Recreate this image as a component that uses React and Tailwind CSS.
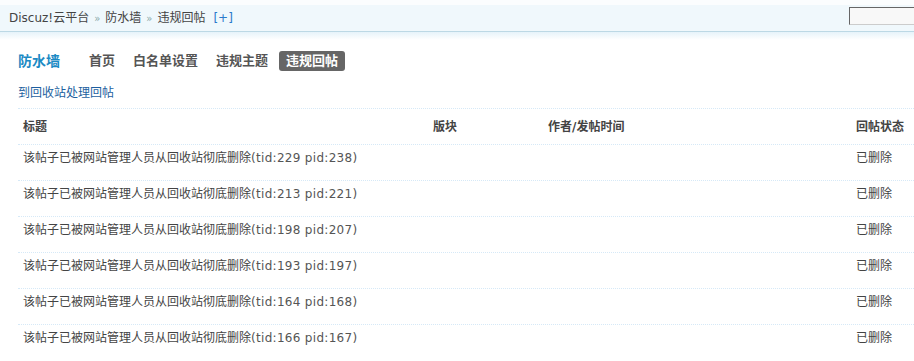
import React from 'react';

const rows = [
  ['229', '238'],
  ['213', '221'],
  ['198', '207'],
  ['193', '197'],
  ['164', '168'],
  ['166', '167'],
];

const font = { fontFamily: '"DejaVu Sans", "Noto Sans CJK SC", sans-serif' };

export default function App() {
  const tabs = ['首页', '白名单设置', '违规主题', '违规回帖'];
  return (
    <div className="w-[914px] h-[361px] overflow-hidden bg-white text-[12px] text-[#444]" style={font}>
      {/* top nav bar */}
      <div className="h-[5px] bg-[#fbfdfe]" />
      <div className="h-[27px] bg-[#f0f8fc] border-b border-[#bcd8e5] flex items-center pl-[9px] text-[#444] overflow-hidden">
        <span>Discuz!云平台</span>
        <span className="mx-[5px] text-[10px] text-[#8aa]">»</span>
        <span>防水墙</span>
        <span className="mx-[5px] text-[10px] text-[#8aa]">»</span>
        <span>违规回帖</span>
        <span className="ml-[8px] text-[#2b7acb]">[+]</span>
        <div className="ml-auto -mr-[5px] shrink-0 self-start mt-[2px] w-[70px] h-[18px] bg-[#f8f8f8] border border-t-[#666] border-l-[#666] border-r-[#ccc] border-b-[#ccc]" />
      </div>
      <div className="h-[8px] bg-gradient-to-b from-[#e6f3fa] to-white" />

      {/* tabs */}
      <div className="flex items-center pl-[18px] mt-[10px] h-[22px]">
        <span className="text-[14px] font-bold text-[#1b8ac4] mr-[22px]">防水墙</span>
        <div className="flex gap-[4px]">
          {tabs.map((t, i) => (
            <span
              key={t}
              className={
                i === tabs.length - 1
                  ? 'px-[7px] h-[20px] leading-[20px] rounded-[3px] bg-[#666] text-white text-[13px] font-bold'
                  : 'px-[7px] h-[20px] leading-[20px] text-[#555] text-[13px] font-bold'
              }
            >
              {t}
            </span>
          ))}
        </div>
      </div>

      <div className="pl-[18px] mt-[13px] text-[#1d5fa0] leading-[16px]">到回收站处理回帖</div>

      {/* table */}
      <div className="ml-[18px] mt-[7px]">
        <div className="h-[36px] border-t border-dotted border-[#d6e9f7] flex items-center font-bold text-[#444] leading-none">
          <span className="pl-[5px] w-[415px]">标题</span>
          <span className="w-[115px]">版块</span>
          <span className="w-[308px]">作者/发帖时间</span>
          <span>回帖状态</span>
        </div>
        {rows.map(([tid, pid]) => (
          <div key={tid} className="h-[36px] border-t border-dotted border-[#d6e9f7] flex items-start pt-[7px] leading-[12px]">
            <span className="pl-[5px] w-[838px]">
              该帖子已被网站管理人员从回收站彻底删除<span className="text-[#555] tracking-[0.3px]">(tid:{tid} pid:{pid})</span>
            </span>
            <span>已删除</span>
          </div>
        ))}
      </div>
    </div>
  );
}
